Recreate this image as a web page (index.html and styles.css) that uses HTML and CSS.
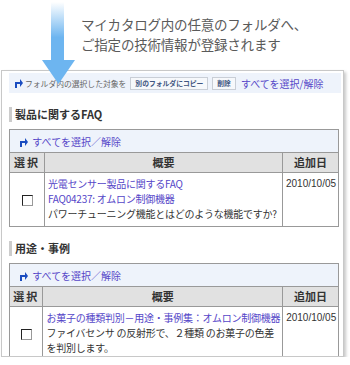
FILE: index.html
```html
<!DOCTYPE html>
<html lang="ja">
<head>
  <meta charset="UTF-8" />
  <title>マイカタログ登録</title>
  <link rel="stylesheet" href="styles.css">
</head>
<body>

<div class="intro">
  <p class="lead">マイカタログ内の任意のフォルダへ、<br>ご指定の技術情報が登録されます</p>
  <svg class="big-arrow" width="38" height="86" viewBox="0 0 38 86">
    <defs>
      <linearGradient id="shaft" x1="0" y1="0" x2="0" y2="1">
        <stop offset="0" stop-color="#6db5f0" stop-opacity="0"/>
        <stop offset="0.6" stop-color="#6db5f0"/>
        <stop offset="1" stop-color="#6db5f0"/>
      </linearGradient>
    </defs>
    <rect x="11" y="2" width="13" height="59" fill="url(#shaft)"/>
    <polygon points="2,60 35,60 18.5,84" fill="#6db5f0"/>
  </svg>
</div>

<div class="panel">
  <div class="toolbar">
    <svg class="corner" width="8" height="9" viewBox="0 0 8 9"><path d="M0 9V3h5V0l3 4-3 4V5H2v4z" fill="#1a4cc0"/></svg>
    <span class="tb-label">フォルダ内の選択した対象を</span>
    <span class="btn">別のフォルダにコピー</span>
    <span class="btn">削除</span>
    <a class="link" href="#">すべてを選択/解除</a>
  </div>

  <h2 class="sec-title">製品に関するFAQ</h2>
  <table class="list">
    <tr>
      <td colspan="3" class="all">
        <svg class="corner" width="8" height="9" viewBox="0 0 8 9"><path d="M0 9V3h5V0l3 4-3 4V5H2v4z" fill="#1a4cc0"/></svg>
        <a class="link" href="#">すべてを選択／解除</a>
      </td>
    </tr>
    <tr>
      <th class="c-chk">選択</th>
      <th class="c-desc">概要</th>
      <th class="c-date">追加日</th>
    </tr>
    <tr>
      <td class="chk"><input type="checkbox"></td>
      <td class="desc">
        <a class="link" href="#">光電センサー製品に関するFAQ</a><br>
        <a class="link" href="#">FAQ04237: オムロン制御機器</a><br>
        パワーチューニング機能とはどのような機能ですか?
      </td>
      <td class="date">2010/10/05</td>
    </tr>
  </table>

  <h2 class="sec-title">用途・事例</h2>
  <table class="list">
    <tr>
      <td colspan="3" class="all">
        <svg class="corner" width="8" height="9" viewBox="0 0 8 9"><path d="M0 9V3h5V0l3 4-3 4V5H2v4z" fill="#1a4cc0"/></svg>
        <a class="link" href="#">すべてを選択／解除</a>
      </td>
    </tr>
    <tr>
      <th class="c-chk">選択</th>
      <th class="c-desc">概要</th>
      <th class="c-date">追加日</th>
    </tr>
    <tr>
      <td class="chk"><input type="checkbox"></td>
      <td class="desc">
        <a class="link" href="#">お菓子の種類判別－用途・事例集：オムロン制御機器</a><br>
        ファイバセンサ の反射形で、２種類 のお菓子の色差<br>を判別します。
      </td>
      <td class="date">2010/10/05</td>
    </tr>
  </table>
</div>

</body>
</html>
```

FILE: styles.css
```css
html, body {
  margin: 0;
  padding: 0;
  background: #fff;
  color: #333;
  font-family: "Noto Sans CJK JP", "Noto Sans", sans-serif;
}
.intro {
  position: relative;
  height: 70px;
  padding: 15px 0 0 81px;
  box-sizing: border-box;
}
.lead {
  margin: 0;
  font-size: 13.5px;
  line-height: 19.6px;
  color: #5a5a5a;
  letter-spacing: -0.2px;
}
.big-arrow {
  position: absolute;
  left: 40px;
  top: 0;
  z-index: 2;
}
.panel {
  margin-left: 1px;
  width: 343px;
  height: 287px;
  box-sizing: border-box;
  border: 1px solid #c8c8c8;
  box-shadow: 2px 2px 3px rgba(0, 0, 0, 0.22);
  padding: 2px 2px 0 7px;
  overflow: hidden;
}
.toolbar {
  display: flex;
  align-items: center;
  height: 20px;
  padding-left: 6px;
  background: #eef3fb;
}
.corner {
  display: block;
  flex: none;
}
.tb-label {
  margin-left: 2px;
  font-size: 7.8px;
  color: #666;
  white-space: nowrap;
}
.btn {
  margin-left: 4px;
  height: 11px;
  padding: 0 4px;
  border: 1px solid #c9ced6;
  background: #f6f8fb;
  font-size: 6.8px;
  font-weight: bold;
  line-height: 11px;
  color: #3f5580;
  white-space: nowrap;
}
.toolbar .link {
  margin-left: 5px;
  font-size: 10px;
}
.link {
  color: #5546c8;
  text-decoration: none;
  white-space: nowrap;
}
.sec-title {
  margin: 14px 0 7px;
  border-left: 3px solid #ccc;
  padding-left: 3px;
  font-size: 11px;
  line-height: 15px;
  font-weight: bold;
  color: #333;
}
.list {
  width: 330px;
  border-collapse: collapse;
  border: 1px solid #999;
  font-size: 10px;
  line-height: 15px;
}
.list td, .list th {
  border: 1px solid #999;
}
.all {
  height: 22px;
  padding: 0 0 0 10px;
  background: #eef3fb;
}
.all .corner {
  display: inline-block;
  vertical-align: -1px;
  margin-right: 2px;
}
.list th {
  height: 19px;
  padding: 0;
  background: #e1e1e1;
  font-size: 11px;
  font-weight: bold;
  color: #333;
}
.c-chk {
  width: 34px;
  letter-spacing: 2px;
}
.c-date {
  width: 55px;
}
.chk {
  text-align: center;
  vertical-align: middle;
  padding: 0;
}
.chk input {
  appearance: none;
  display: block;
  margin: 2px auto 0;
  width: 11px;
  height: 11px;
  box-sizing: border-box;
  border: 1px solid #999;
  border-top-color: #222;
  border-left-color: #222;
  background: #fff;
}
.desc {
  padding: 3px 2px 5px 3px;
  vertical-align: top;
  color: #333;
  letter-spacing: -0.25px;
}
.date {
  padding: 3px 0 0 3px;
  vertical-align: top;
  font-family: "Liberation Sans", Arial, sans-serif;
  font-size: 10px;
  color: #333;
}
```
